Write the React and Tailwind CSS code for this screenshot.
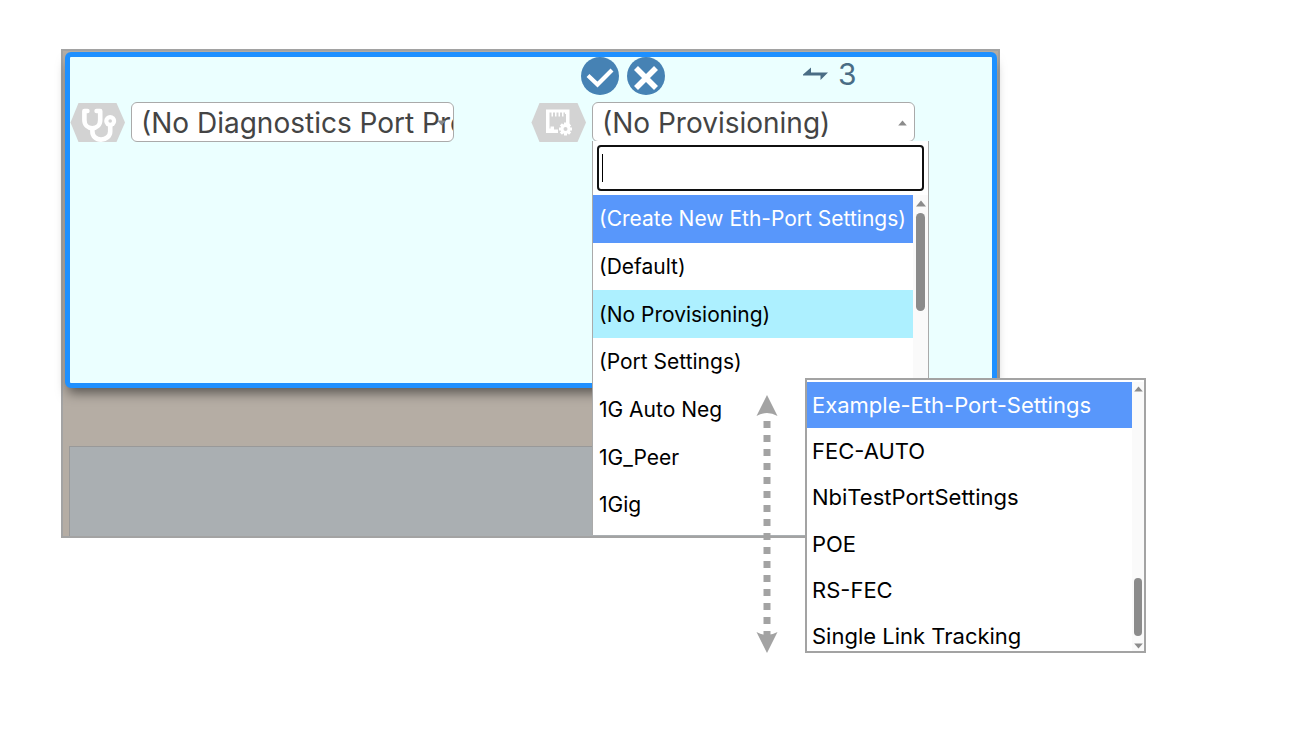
import React from "react";

const portSettings = [
  "(Create New Eth-Port Settings)",
  "(Default)",
  "(No Provisioning)",
  "(Port Settings)",
  "1G Auto Neg",
  "1G_Peer",
  "1Gig",
];

const moreSettings = [
  "Example-Eth-Port-Settings",
  "FEC-AUTO",
  "NbiTestPortSettings",
  "POE",
  "RS-FEC",
  "Single Link Tracking",
];

function HexBadge({ children }) {
  return (
    <svg viewBox="0 0 55 39" className="h-[39px] w-[55px] shrink-0" aria-hidden="true">
      <path d="M0.5 19.5 8.5 0H46.5L55 19.5 46.5 39H8.5Z" fill="#d3d3d3" />
      {children}
    </svg>
  );
}

function StethoscopeIcon() {
  return (
    <HexBadge>
      <g fill="none" stroke="#fff" strokeWidth="4.6" strokeLinecap="round" strokeLinejoin="round">
        <path d="M17.4 8H14.4V17C14.4 22 18 25.2 22.3 25.2S30.2 22 30.2 17V8H26.6" />
        <path d="M22.4 26V28.4C22.4 33 26 36.6 31 36.6S40.2 33 40.2 28.4V22" />
      </g>
      <circle cx="40.2" cy="18" r="6" fill="#fff" />
      <circle cx="40.2" cy="18" r="1.8" fill="#d3d3d3" />
    </HexBadge>
  );
}

function PortSettingsIcon() {
  return (
    <HexBadge>
      <path
        d="M15 6.5H38.5V23H35V11H34V9.5H32.5V13.5H31V9.5H29V13.5H27.5V9.5H25.5V13.5H24V9.5H22V13.5H20.5V9.5H18.5V25.5H19.5V23.5H23V26.5H27V30H15Z"
        fill="#fff"
      />
      <g stroke="#fff" strokeWidth="3">
        <path d="M34.5 19.5V32.5M28 26H41M29.9 21.4 39.1 30.6M39.1 21.4 29.9 30.6" />
      </g>
      <circle cx="34.5" cy="26" r="5" fill="#fff" />
      <circle cx="34.5" cy="26" r="2" fill="#d3d3d3" />
    </HexBadge>
  );
}

function Triangle({ down = false, className }) {
  return (
    <svg viewBox="0 0 10 7" className={className} aria-hidden="true">
      <path d={down ? "M0 0.5H10L5 6.5Z" : "M0 6.5H10L5 0.5Z"} fill="#8b8b8b" />
    </svg>
  );
}

function ProfileSelect({ id, label, value, open = false }) {
  return (
    <>
      <label htmlFor={id} className="sr-only">{label}</label>
      <select
        id={id}
        defaultValue={value}
        className="block h-10 w-full appearance-none overflow-hidden rounded-md border border-[#aaa] bg-white pt-0.5 pl-[9px] text-[28px] leading-9 text-[#444] outline-none"
      >
        <option>{value}</option>
      </select>
      <Triangle
        down={!open}
        className="pointer-events-none absolute top-[18px] right-2 h-1.5 w-[9px]"
      />
    </>
  );
}

export default function App() {
  return (
    <main className="min-h-screen bg-white px-[61px] pt-[49px] font-['Inter',sans-serif] text-black">
      <div className="relative w-full max-w-[939px] border-2 border-[#a3a3a3] bg-[#b5ada4] pt-px pr-px pl-0.5">
        <section className="min-h-[336px] rounded-md border-[5px] border-[#1e90ff] bg-[#ebffff] shadow-[0_8px_12px_-3px_rgba(0,0,0,0.5)]">
          <div className="grid grid-cols-2">
            <div className="col-start-2 flex items-start pl-[50px]">
              <button type="button" aria-label="Apply" className="mr-2">
                <svg viewBox="0 0 38 38" className="size-[38px]">
                  <circle cx="19" cy="19" r="19" fill="#4682b4" />
                  <path d="M7 18.5 16.5 27.5 31 13" fill="none" stroke="#fff" strokeWidth="4.2" />
                </svg>
              </button>
              <button type="button" aria-label="Cancel">
                <svg viewBox="0 0 38 38" className="size-[38px]">
                  <circle cx="19" cy="19" r="19" fill="#4682b4" />
                  <path d="M9 11 29 31M29 11 9 31" fill="none" stroke="#fff" strokeWidth="5.6" />
                </svg>
              </button>
              <div className="ml-[138px] flex items-center gap-2.5 text-[30px] leading-[34px] text-[#4a6d85]">
                <svg viewBox="0 0 25 14" className="h-3.5 w-[25px]" aria-hidden="true">
                  <path d="M0 7.5 8 0.5V5.5H25L17.5 13V8.5H0Z" fill="#4a6d85" />
                </svg>
                <span>3</span>
              </div>
            </div>
          </div>

          <div className="mt-[7px] grid grid-cols-2">
            <div className="flex items-center gap-1.5 pr-[77px]">
              <StethoscopeIcon />
              <div className="relative min-w-0 flex-1">
                <ProfileSelect
                  id="diagnostics"
                  label="Diagnostics port profile"
                  value="(No Diagnostics Port Profile)"
                />
              </div>
            </div>
            <div className="flex items-center gap-1.5 pr-[77px]">
              <PortSettingsIcon />
              <div className="relative min-w-0 flex-1">
                <ProfileSelect
                  id="provisioning"
                  label="Ethernet port provisioning"
                  value="(No Provisioning)"
                  open
                />
                <div className="absolute top-[39px] left-0 z-10 w-[337px] border-x border-[#aaa] bg-white pt-1">
                  <div className="relative px-1">
                    <label htmlFor="search" className="sr-only">Search settings</label>
                    <input
                      id="search"
                      type="text"
                      className="block h-[46px] w-full rounded-sm border-2 border-[#101010] bg-white px-1 text-[21px] caret-transparent outline-none"
                    />
                    <span className="absolute top-[9px] left-[9px] h-7 w-px bg-black" />
                  </div>
                  <div className="mt-1 flex">
                    <div role="listbox" aria-label="Port settings" className="grid h-[334px] min-w-0 flex-1 grid-cols-1 grid-rows-7 text-[21px]">
                      {portSettings.map((name, i) => (
                        <button
                          key={name}
                          type="button"
                          role="option"
                          aria-selected={i === 2}
                          className={
                            "px-1.5 text-left whitespace-nowrap " +
                            (i === 0 ? "bg-[#5897fb] text-white" : i === 2 ? "bg-[#adf0ff]" : "")
                          }
                        >
                          {name}
                        </button>
                      ))}
                    </div>
                    <div className="flex w-[15px] shrink-0 flex-col items-center bg-[#fafafa] pt-[5px]">
                      <Triangle className="h-[7px] w-2.5" />
                      <div className="mt-1.5 h-[98px] w-[9px] rounded-full bg-[#8b8b8b]" />
                    </div>
                  </div>
                  <div className="h-1.5" />
                </div>
              </div>
            </div>
          </div>
        </section>

        <div className="mt-[58px] ml-1 h-[90px] border-t border-l border-[#999] bg-[#aaafb2]" />

        <svg viewBox="0 0 22 258" className="absolute top-[344px] left-[693px] z-20 h-[258px] w-[22px]" aria-hidden="true">
          <path d="M11 26V240" stroke="#a3a3a3" strokeWidth="7" strokeDasharray="7 7" />
          <path d="M11 0 21.5 21Q11 15 0.5 21ZM11 258 21.5 237Q11 243 0.5 237Z" fill="#a3a3a3" />
        </svg>

        <div className="absolute top-[327px] left-[742px] z-20 flex h-[275px] w-[341px] overflow-hidden border-2 border-[#a3a3a3] bg-white pt-0.5">
          <div role="listbox" aria-label="More port settings" className="grid h-[278px] min-w-0 flex-1 grid-cols-1 grid-rows-6 text-[22px]">
            {moreSettings.map((name, i) => (
              <button
                key={name}
                type="button"
                role="option"
                aria-selected={i === 0}
                className={
                  "px-[5px] text-left whitespace-nowrap " +
                  (i === 0 ? "bg-[#5897fb] text-white" : "")
                }
              >
                {name}
              </button>
            ))}
          </div>
          <div className="flex h-full w-3 shrink-0 flex-col items-center bg-[#fafafa] pt-1 pb-0.5">
            <Triangle className="h-1.5 w-[9px]" />
            <div className="mt-auto mb-[7px] h-[58px] w-2 rounded-full bg-[#8b8b8b]" />
            <Triangle down className="h-1.5 w-[9px]" />
          </div>
        </div>
      </div>
    </main>
  );
}
